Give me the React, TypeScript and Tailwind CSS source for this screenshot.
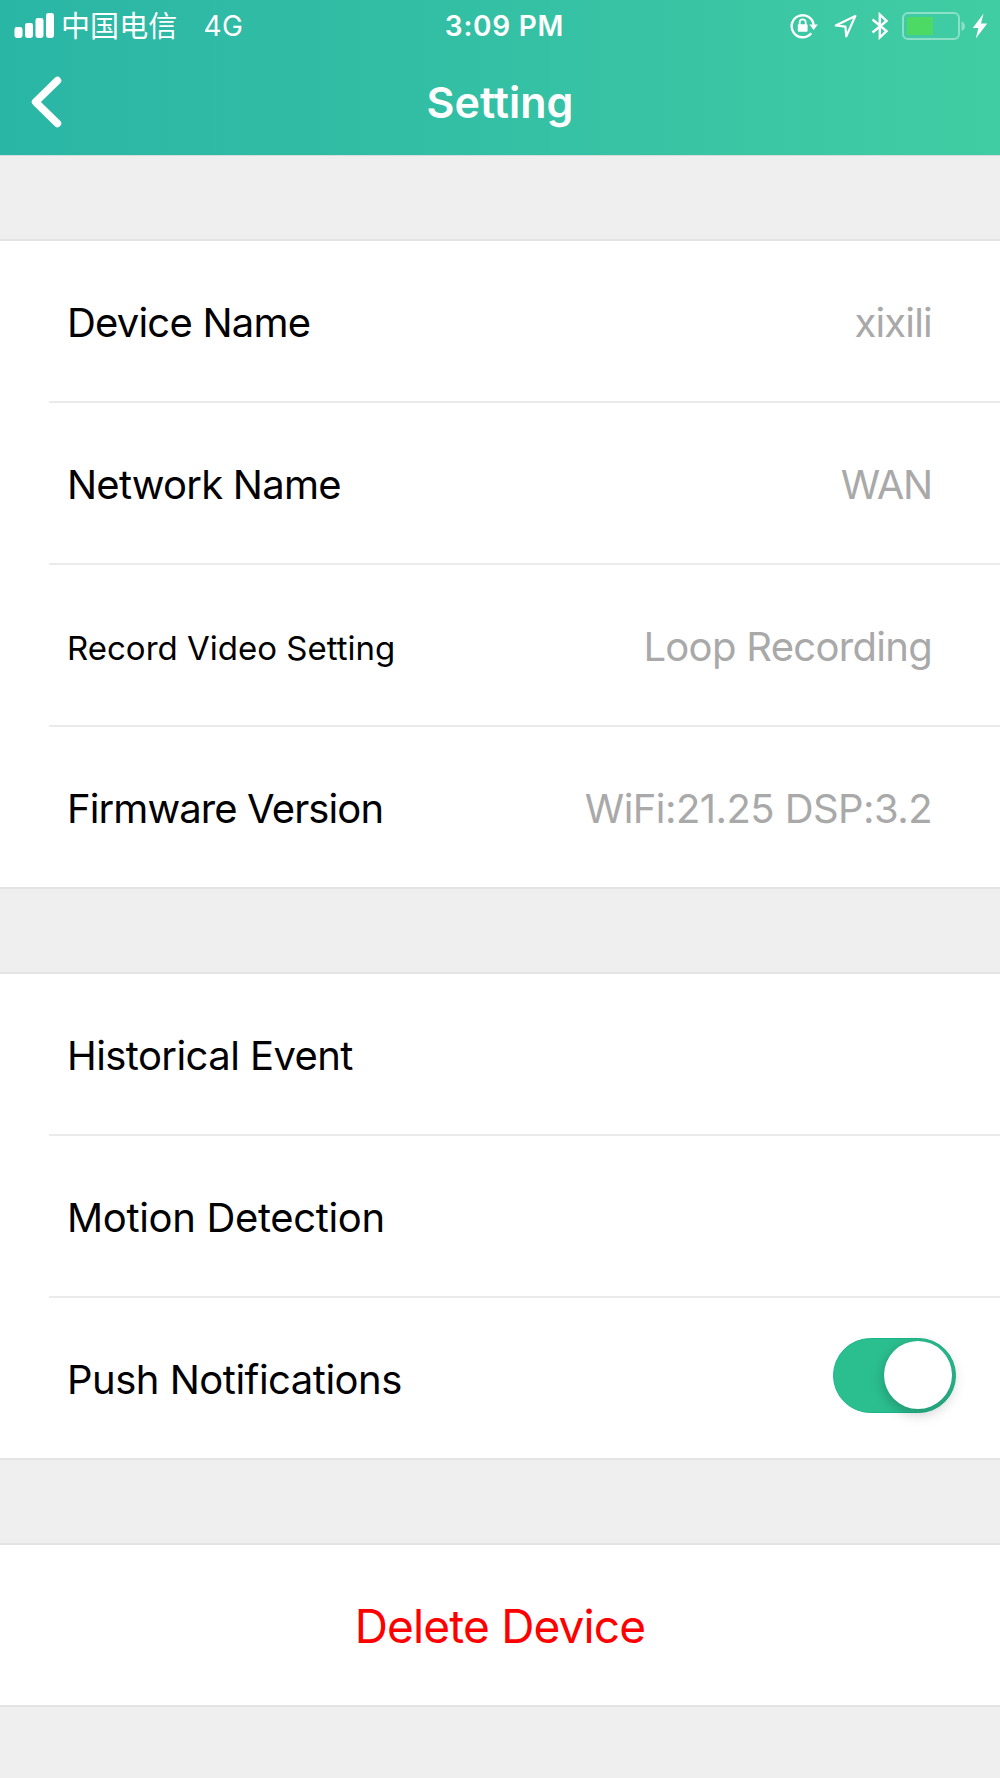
import { useState } from "react";
import clsx from "clsx";

interface Item {
    label: string;
    value?: string;
    labelClass?: string;
    valueClass?: string;
}

const deviceItems: Item[] = [
    { label: "Device Name", value: "xixili", labelClass: "tracking-[-0.8px]", valueClass: "tracking-[-0.8px]" },
    { label: "Network Name", value: "WAN", labelClass: "tracking-[-0.77px]", valueClass: "tracking-[-1.2px]" },
    { label: "Record Video Setting", value: "Loop Recording", labelClass: "text-[33px] pt-1", valueClass: "tracking-[-0.7px]" },
    { label: "Firmware Version", value: "WiFi:21.25 DSP:3.2", labelClass: "tracking-[-0.9px]", valueClass: "tracking-[-0.57px]" },
];

const eventItems: Item[] = [
    { label: "Historical Event", labelClass: "tracking-[-0.57px]" },
    { label: "Motion Detection", labelClass: "tracking-[-0.34px]" },
];

const StatusBar = () => {
    return (
        <div className="grid grid-cols-3 h-[52px] text-[28px] leading-none">
            <div className="flex items-center pl-[14px]">
                <svg width="41" height="26" viewBox="0 0 41 26" fill="white">
                    <rect x="0.5" y="14" width="8" height="11" rx="2.4" />
                    <rect x="11" y="10" width="8" height="15" rx="2.4" />
                    <rect x="21.5" y="5" width="8" height="20" rx="2.4" />
                    <rect x="32" y="0" width="8" height="25" rx="2.4" />
                </svg>
                <span className="ml-[6px] pb-[4px] text-[29px] tracking-[0.1px] font-['Noto_Sans_CJK_SC',sans-serif]">中国电信</span>
                <span className="ml-[26px] tracking-[0.4px]">4G</span>
            </div>
            <div className="flex items-center justify-center pl-[9px] font-semibold tracking-[0.75px]">3:09 PM</div>
            <div className="flex items-center justify-end pr-[12px]">
                {/* rotation lock */}
                <svg width="28" height="26" viewBox="0 0 28 26" fill="none">
                    <path d="M21.2 20.2A11 11 0 1 1 23.6 12" stroke="white" strokeWidth="2.4" />
                    <path d="M19.4 11.5h8.4l-4.2 5.6z" fill="white" />
                    <path d="M9.7 12V9.3a3 3 0 0 1 6 0V12" stroke="white" strokeWidth="1.8" />
                    <rect x="7.8" y="11.2" width="9.8" height="7.6" rx="1" fill="white" />
                </svg>
                {/* location */}
                <svg className="ml-[15px]" width="25" height="25" viewBox="0 0 25 25" fill="none">
                    <path d="M22.3 2 2.8 11.4l9.6 1.2.9 9.8z" stroke="white" strokeWidth="2.2" strokeLinejoin="round" />
                </svg>
                {/* bluetooth */}
                <svg className="ml-[13px]" width="18" height="30" viewBox="0 0 18 30" fill="none">
                    <path d="M1.5 8.5 15.5 20 8.8 26.5v-23l6.7 6.5-14 11.5" stroke="white" strokeWidth="2.4" />
                </svg>
                {/* battery */}
                <svg className="ml-[13px]" width="63" height="28" viewBox="0 0 63 28" fill="none">
                    <rect x="1" y="1" width="56" height="26" rx="5" stroke="white" strokeOpacity="0.4" strokeWidth="2" />
                    <rect x="5" y="5" width="26" height="18" fill="#4cd964" />
                    <path d="M59.5 9.5a5 5 0 0 1 0 9.5z" fill="white" fillOpacity="0.4" />
                </svg>
                <svg className="ml-[7px]" width="16" height="26" viewBox="0 0 16 26" fill="white">
                    <path d="M11.6 0.5 0.8 15h5.6L3.8 25.5 15.2 10.4H9z" />
                </svg>
            </div>
        </div>
    );
};

const Row = ({ label, value, labelClass, valueClass }: Item) => {
    return (
        <div className="flex items-center justify-between h-[162px] last:h-[160px] pt-[3px] pl-[18px] pr-[68px]">
            <span className={clsx("text-black", labelClass)}>{label}</span>
            {value && <span className={clsx("text-[#a9a9a9]", valueClass)}>{value}</span>}
        </div>
    );
};

const App = () => {
    const [push, setPush] = useState(true);

    return (
        <div className="w-[1000px] h-[1778px] overflow-hidden bg-[#efefef] font-['Inter',sans-serif] text-[40px] leading-none">
            <header className="h-[156px] text-white bg-linear-to-r from-[#2ab6a5] via-[#34c0a4] to-[#41cda3] border-b border-[#d5dcda]">
                <StatusBar />
                <div className="grid grid-cols-3 items-center h-[100px]">
                    <button className="pl-[30px]" aria-label="Back">
                        <svg width="34" height="54" viewBox="0 0 34 54" fill="none">
                            <path d="M27.5 5.5 5.5 27l22 21.5" stroke="white" strokeWidth="7.4" strokeLinecap="round" strokeLinejoin="round" />
                        </svg>
                    </button>
                    <h1 className="text-center text-[43px] font-semibold">Setting</h1>
                </div>
            </header>

            <section className="mt-[83px] pl-[49px] bg-white border-y-2 border-[#e4e4e4] divide-y-2 divide-[#ebebeb]">
                {deviceItems.map((item) => (
                    <Row key={item.label} {...item} />
                ))}
            </section>

            <section className="mt-[83px] pl-[49px] bg-white border-y-2 border-[#e4e4e4] divide-y-2 divide-[#ebebeb]">
                {eventItems.map((item) => (
                    <Row key={item.label} {...item} />
                ))}
                <div className="flex items-center justify-between h-[160px] pt-[3px] pl-[18px] pr-[44px]">
                    <span className="text-black tracking-[-0.5px]">Push Notifications</span>
                    <button
                        role="switch"
                        aria-checked={push}
                        aria-label="Push Notifications"
                        onClick={() => setPush(!push)}
                        className={clsx(
                            "flex items-center w-[123px] h-[75px] mb-[9px] px-[3px] rounded-full border border-[#1bb688]",
                            push ? "justify-end bg-[#2bbf90]" : "justify-start bg-[#e5e5e5]"
                        )}
                    >
                        <span className="size-[68px] rounded-full bg-white shadow-[0_4px_14px_rgba(0,0,0,0.25)]" />
                    </button>
                </div>
            </section>

            <section className="mt-[83px] bg-white border-y-2 border-[#e4e4e4]">
                <button className="block w-full h-[160px] pt-[2px] text-center text-[46px] tracking-[-0.85px] text-[#ff0000]">Delete Device</button>
            </section>
        </div>
    );
};

export default App;
